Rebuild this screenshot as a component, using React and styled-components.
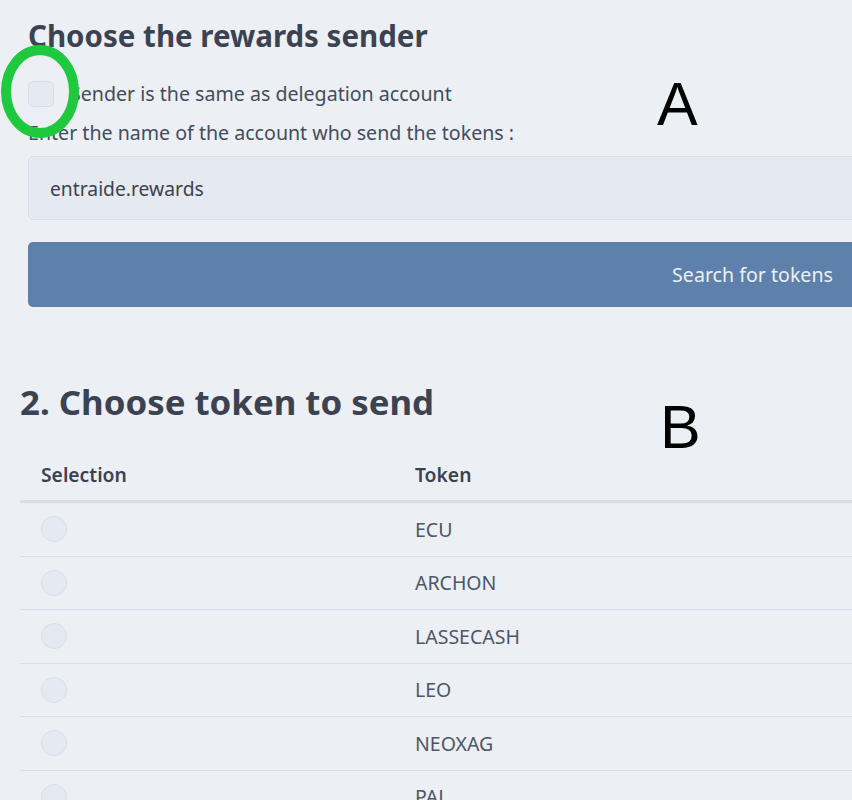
import React from 'react'
import styled, { createGlobalStyle } from 'styled-components'

const GlobalStyle = createGlobalStyle`
  html, body {
    margin: 0;
    background: #eceff4;
    overflow: hidden;
  }
  body {
    font-family: "Noto Sans", "Open Sans", sans-serif;
    color: #3b4252;
  }
`

const tokens = ['ECU', 'ARCHON', 'LASSECASH', 'LEO', 'NEOXAG', 'PAL']

const Page = styled.div`
  position: relative;
  width: 852px;
  height: 800px;
  overflow: hidden;
  padding-top: 16px;
  box-sizing: border-box;
`

const Sender = styled.section`
  width: 1449px;
  margin-left: 28px;
`

const Title = styled.h2`
  margin: 0;
  font-size: 29.5px;
  line-height: 40px;
  font-weight: 700;
  color: #3b4252;
`

const CheckRow = styled.label`
  display: flex;
  align-items: center;
  gap: 16px;
  margin-top: 25px;
  font-size: 19.6px;
  line-height: 26px;
  color: #434c5e;
`

const Check = styled.span`
  width: 26px;
  height: 26px;
  box-sizing: border-box;
  border-radius: 5px;
  background: #e5e9f0;
  border: 1px solid #d8dee9;
`

const FieldLabel = styled.div`
  margin-top: 13px;
  font-size: 19.6px;
  line-height: 26px;
  color: #434c5e;
`

const Input = styled.div`
  margin-top: 10px;
  height: 64px;
  box-sizing: border-box;
  display: flex;
  align-items: center;
  padding: 0 21px;
  background: #e5e9f0;
  border: 1px solid #d8dee9;
  border-radius: 5px;
  font-size: 19.3px;
  color: #3b4252;
`

const Button = styled.div`
  margin-top: 22px;
  height: 65px;
  display: flex;
  align-items: center;
  justify-content: center;
  background: #5e81ac;
  border-radius: 5px;
  font-size: 19.6px;
  color: #eceff4;
`

const Tokens = styled.section`
  margin: 73px 0 0 20px;
`

const BigTitle = styled.h2`
  margin: 0;
  font-size: 34.8px;
  line-height: 44px;
  font-weight: 700;
  color: #3b4252;
`

const Table = styled.table`
  width: 1460px;
  margin-top: 25px;
  border-collapse: collapse;
`

const Head = styled.th`
  text-align: left;
  padding: 0 0 0 21px;
  height: 51px;
  font-size: 19.3px;
  font-weight: 600;
  color: #3b4252;
  border-bottom: 3px solid #d8dee9;
  width: ${p => p.$w || 'auto'};
`

const Cell = styled.td`
  padding: 0 0 0 21px;
  height: 52.5px;
  font-size: 19.5px;
  color: #4c566a;
  border-bottom: 1px solid #d8dee9;
`

const Radio = styled.span`
  display: block;
  width: 26px;
  height: 26px;
  box-sizing: border-box;
  border-radius: 50%;
  background: #e5e9f0;
  border: 1px solid #d8dee9;
`

const Mark = styled.div`
  position: absolute;
  left: ${p => p.$x}px;
  top: ${p => p.$y}px;
  font-family: "Liberation Sans", Arial, sans-serif;
  font-size: 61px;
  line-height: 1;
  color: #000;
`

const Circle = styled.svg`
  position: absolute;
  left: 0;
  top: 40px;
`

export default function App() {
  return (
    <Page>
      <GlobalStyle />
      <Sender>
        <Title>Choose the rewards sender</Title>
        <CheckRow>
          <Check />
          Sender is the same as delegation account
        </CheckRow>
        <FieldLabel>Enter the name of the account who send the tokens :</FieldLabel>
        <Input>entraide.rewards</Input>
        <Button>Search for tokens</Button>
      </Sender>
      <Tokens>
        <BigTitle>2. Choose token to send</BigTitle>
        <Table>
          <thead>
            <tr>
              <Head $w="353px">Selection</Head>
              <Head>Token</Head>
            </tr>
          </thead>
          <tbody>
            {tokens.map(t => (
              <tr key={t}>
                <Cell><Radio /></Cell>
                <Cell>{t}</Cell>
              </tr>
            ))}
          </tbody>
        </Table>
      </Tokens>
      <Mark $x={657} $y={74}>A</Mark>
      <Mark $x={660} $y={397}>B</Mark>
      <Circle width="82" height="104" viewBox="0 0 82 104">
        <ellipse cx="40" cy="51.5" rx="34" ry="41.5" fill="none" stroke="#1fc93e" strokeWidth="10" />
      </Circle>
    </Page>
  )
}
